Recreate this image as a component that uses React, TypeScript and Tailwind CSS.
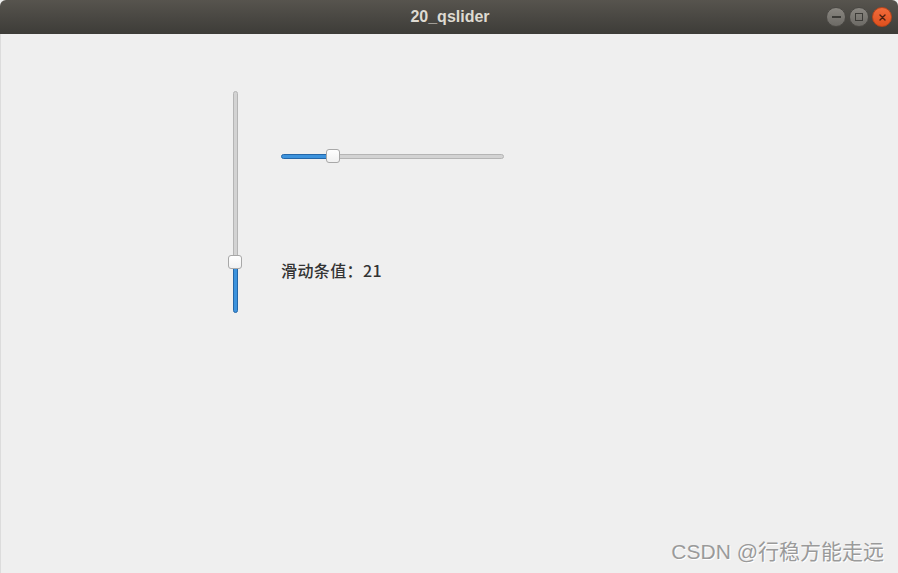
const WindowButton = ({ kind }: { kind: "min" | "max" | "close" }) => {
  if (kind === "close") {
    return (
      <div className="w-[20px] h-[20px] rounded-full bg-gradient-to-b from-[#f26b3a] to-[#e0501d] border border-[#b9441a] flex items-center justify-center">
        <svg width="9" height="9" viewBox="0 0 9 9">
          <path d="M2 2 L7 7 M7 2 L2 7" stroke="#4a2010" strokeWidth="1.4" strokeLinecap="round" />
        </svg>
      </div>
    );
  }
  return (
    <div className="w-[20px] h-[20px] rounded-full bg-gradient-to-b from-[#8a8781] to-[#6c6a65] border border-[#4a4844] flex items-center justify-center">
      {kind === "min" ? (
        <div className="w-[9px] h-[2px] bg-[#3c3b37]" />
      ) : (
        <div className="w-[8px] h-[8px] border-[1.5px] border-[#3c3b37]" />
      )}
    </div>
  );
};

const App = () => {
  return (
    <div className="w-[898px] h-[573px] flex flex-col bg-[#efefef] overflow-hidden">
      <div className="h-[34px] shrink-0 rounded-t-[6px] bg-gradient-to-b from-[#57544e] to-[#3d3c38] flex items-center relative">
        <div className="flex-1 text-center text-[16px] font-bold text-[#dfdbd2] font-['Liberation_Sans',sans-serif] pl-[2px]">
          20_qslider
        </div>
        <div className="absolute right-[6px] top-[7px] flex gap-[3px]">
          <WindowButton kind="min" />
          <WindowButton kind="max" />
          <WindowButton kind="close" />
        </div>
      </div>

      <div className="flex-1 flex flex-col border-l border-[#dcdcdc]">
        <div className="flex pl-[227px] pt-[57px]">
          {/* vertical slider */}
          <div className="w-[14px] h-[222px] flex flex-col items-center">
            <div className="w-[5px] flex-1 rounded-t-full bg-[#d3d3d3] border border-[#b5b5b5] -mb-[2px]" />
            <div className="w-[14px] h-[14px] rounded-[3px] bg-gradient-to-b from-white to-[#f1f1f1] border border-[#a8a8a8] shrink-0 z-10" />
            <div className="w-[5px] h-[46px] rounded-b-full bg-[#3d93dd] border border-[#2567a8] -mt-[2px]" />
          </div>

          <div className="ml-[39px] flex flex-col">
            {/* horizontal slider */}
            <div className="mt-[58px] w-[223px] h-[14px] flex items-center">
              <div className="w-[47px] h-[5px] rounded-l-full bg-[#3d93dd] border border-[#2567a8] -mr-[2px]" />
              <div className="w-[14px] h-[14px] rounded-[3px] bg-gradient-to-b from-white to-[#f1f1f1] border border-[#a8a8a8] shrink-0 z-10" />
              <div className="flex-1 h-[5px] rounded-r-full bg-[#d3d3d3] border border-[#b5b5b5] -ml-[2px]" />
            </div>

            <div className="mt-[97px] text-[16px] font-medium text-[#333333] font-['Noto_Sans_CJK_SC',sans-serif] leading-[20px] tracking-[0.4px]">
              滑动条值：21
            </div>
          </div>
        </div>

        <div className="mt-auto flex justify-end pr-[14px] pb-[6px]">
          <span className="text-[21px] text-[#9a9a9a] font-['Liberation_Sans','Noto_Sans_CJK_SC',sans-serif] [text-shadow:1px_1px_0_#ffffff]">
            CSDN @行稳方能走远
          </span>
        </div>
      </div>
    </div>
  );
};

export default App;
